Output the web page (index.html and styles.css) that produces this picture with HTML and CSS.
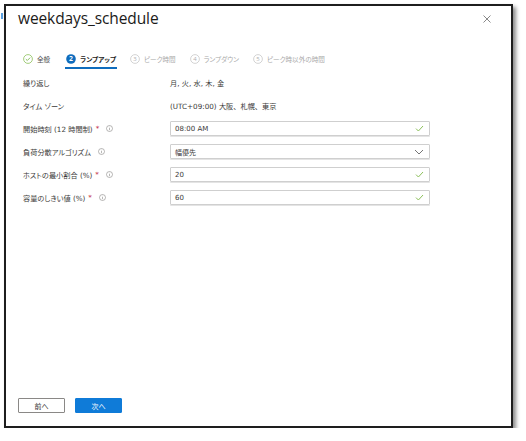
FILE: index.html
```html
<!DOCTYPE html>
<html lang="ja">
<head>
<meta charset="utf-8">
<title>weekdays_schedule</title>
<link rel="stylesheet" href="styles.css">
</head>
<body>
<div class="page">
  <span class="edge-mark"></span>
  <div class="dialog">
    <div class="header">
      <h1 class="title">weekdays_schedule</h1>
      <svg class="close" width="8" height="8" viewBox="0 0 8 8"><path d="M0.5 0.5 L7.5 7.5 M7.5 0.5 L0.5 7.5" stroke="#7a7a7a" stroke-width="0.9" fill="none"/></svg>
    </div>
    <div class="tabs">
      <div class="tab done">
        <svg width="10" height="10" viewBox="0 0 10 10"><circle cx="5" cy="5" r="4.4" fill="none" stroke="#8cc05a" stroke-width="0.8"/><path d="M2.8 5.1 L4.3 6.5 L7.2 3.6" fill="none" stroke="#6fae3c" stroke-width="0.8"/></svg>
        <span>全般</span>
      </div>
      <div class="tab active">
        <svg width="10" height="10" viewBox="0 0 10 10"><circle cx="5" cy="5" r="4.8" fill="#0f6cbd"/><text x="5" y="7.4" text-anchor="middle" font-size="6.8" font-weight="700" fill="#fff" font-family="Open Sans, sans-serif">2</text></svg>
        <span>ランプアップ</span>
      </div>
      <div class="tab">
        <svg width="10" height="10" viewBox="0 0 10 10"><circle cx="5" cy="5" r="4.4" fill="none" stroke="#c2c2c2" stroke-width="0.7"/><text x="5" y="7.2" text-anchor="middle" font-size="6" fill="#b0b0b0" font-family="Open Sans, sans-serif">3</text></svg>
        <span>ピーク時間</span>
      </div>
      <div class="tab">
        <svg width="10" height="10" viewBox="0 0 10 10"><circle cx="5" cy="5" r="4.4" fill="none" stroke="#c2c2c2" stroke-width="0.7"/><text x="5" y="7.2" text-anchor="middle" font-size="6" fill="#b0b0b0" font-family="Open Sans, sans-serif">4</text></svg>
        <span>ランプダウン</span>
      </div>
      <div class="tab">
        <svg width="10" height="10" viewBox="0 0 10 10"><circle cx="5" cy="5" r="4.4" fill="none" stroke="#c2c2c2" stroke-width="0.7"/><text x="5" y="7.2" text-anchor="middle" font-size="6" fill="#b0b0b0" font-family="Open Sans, sans-serif">5</text></svg>
        <span>ピーク時以外の時間</span>
      </div>
    </div>

    <div class="form">
      <div class="label">繰り返し</div>
      <div class="value">月, 火, 水, 木, 金</div>

      <div class="label">タイム ゾーン</div>
      <div class="value">(UTC+09:00) 大阪、札幌、東京</div>

      <div class="label">開始時刻 (12 時間制)<span class="req">*</span><svg class="info" width="7" height="7" viewBox="0 0 7 7"><circle cx="3.5" cy="3.5" r="3" fill="none" stroke="#8a8886" stroke-width="0.6"/><path d="M3.5 3 V5.2 M3.5 1.8 V2.3" stroke="#8a8886" stroke-width="0.6"/></svg></div>
      <div class="input"><span>08:00 AM</span>
        <svg class="check" width="9" height="7" viewBox="0 0 9 7"><path d="M1 3.6 L3.4 6 L8 1" fill="none" stroke="#8cc05a" stroke-width="1"/></svg></div>

      <div class="label">負荷分散アルゴリズム<svg class="info" width="7" height="7" viewBox="0 0 7 7"><circle cx="3.5" cy="3.5" r="3" fill="none" stroke="#8a8886" stroke-width="0.6"/><path d="M3.5 3 V5.2 M3.5 1.8 V2.3" stroke="#8a8886" stroke-width="0.6"/></svg></div>
      <div class="input"><span>幅優先</span>
        <svg class="chev" width="10" height="6" viewBox="0 0 10 6"><path d="M1 1 L5 5 L9 1" fill="none" stroke="#666" stroke-width="0.9"/></svg></div>

      <div class="label">ホストの最小割合 (%)<span class="req">*</span><svg class="info" width="7" height="7" viewBox="0 0 7 7"><circle cx="3.5" cy="3.5" r="3" fill="none" stroke="#8a8886" stroke-width="0.6"/><path d="M3.5 3 V5.2 M3.5 1.8 V2.3" stroke="#8a8886" stroke-width="0.6"/></svg></div>
      <div class="input"><span>20</span>
        <svg class="check" width="9" height="7" viewBox="0 0 9 7"><path d="M1 3.6 L3.4 6 L8 1" fill="none" stroke="#8cc05a" stroke-width="1"/></svg></div>

      <div class="label">容量のしきい値 (%)<span class="req">*</span><svg class="info" width="7" height="7" viewBox="0 0 7 7"><circle cx="3.5" cy="3.5" r="3" fill="none" stroke="#8a8886" stroke-width="0.6"/><path d="M3.5 3 V5.2 M3.5 1.8 V2.3" stroke="#8a8886" stroke-width="0.6"/></svg></div>
      <div class="input"><span>60</span>
        <svg class="check" width="9" height="7" viewBox="0 0 9 7"><path d="M1 3.6 L3.4 6 L8 1" fill="none" stroke="#8cc05a" stroke-width="1"/></svg></div>
    </div>

    <div class="footer">
      <button class="btn prev">前へ</button>
      <button class="btn next">次へ</button>
    </div>
  </div>
</div>
</body>
</html>
```
FILE: styles.css
```css
html, body {
  margin: 0;
  padding: 0;
  background: #ffffff;
}
body {
  font-family: "DejaVu Sans", "Noto Sans CJK JP", sans-serif;
  color: #323130;
}
.page {
  position: relative;
  padding: 4px 0 0 4px;
}
.edge-mark {
  position: absolute;
  left: 1px;
  top: 13px;
  width: 2px;
  height: 6px;
  background: #5aa0e0;
}
.dialog {
  box-sizing: border-box;
  width: 509px;
  height: 424px;
  border: 2px solid #1e1e1e;
  box-shadow: 3px 3px 4px rgba(0, 0, 0, 0.45);
  background: #fff;
  display: flex;
  flex-direction: column;
}
.header {
  display: flex;
  align-items: flex-start;
  justify-content: space-between;
  padding: 2px 20px 0 12px;
}
.title {
  margin: 0;
  font-family: "Open Sans", sans-serif;
  font-weight: 500;
  font-size: 15.5px;
  line-height: 20px;
  color: #1b1a19;
  letter-spacing: -0.1px;
}
.close {
  margin-top: 7px;
}
.tabs {
  display: flex;
  gap: 12px;
  margin: 23px 0 0 16px;
}
.tab {
  display: flex;
  align-items: center;
  gap: 4px;
  height: 16px;
  padding: 0 1px;
  font-family: "Noto Sans CJK JP", sans-serif;
  font-feature-settings: "palt";
  font-size: 6.6px;
  color: #a8a8a8;
  border-bottom: 2px solid transparent;
}
.tab.done {
  color: #505050;
  margin-right: 2px;
}
.tab.active {
  color: #1b1a19;
  font-weight: 700;
  border-bottom-color: #0f6cbd;
}
.form {
  display: grid;
  grid-template-columns: 147px 260px;
  grid-auto-rows: 15px;
  row-gap: 8px;
  margin: 6px 0 0 17px;
  font-size: 7.2px;
}
.label, .value {
  display: flex;
  align-items: center;
  color: #3b3a39;
}
.label {
  font-feature-settings: "palt";
}
.req {
  color: #c4314b;
  margin-left: 3px;
}
.info {
  margin-left: 7px;
}
.input {
  box-sizing: border-box;
  display: flex;
  align-items: center;
  justify-content: space-between;
  border: 1px solid #cfcfcf;
  box-shadow: 0 1px 0 #e4e4e4;
  border-radius: 1px;
  padding: 0 5px 0 4px;
  color: #3b3a39;
  font-size: 7px;
}
.footer {
  margin-top: auto;
  display: flex;
  gap: 10px;
  padding: 0 0 13px 12px;
}
.btn {
  box-sizing: border-box;
  width: 47px;
  height: 15px;
  font-family: "Noto Sans CJK JP", sans-serif;
  font-feature-settings: "palt";
  font-size: 7px;
  border-radius: 1px;
  padding: 0;
}
.btn.prev {
  background: #fff;
  border: 1px solid #8a8886;
  color: #323130;
}
.btn.next {
  background: #0f7bd8;
  border: 1px solid #0f7bd8;
  color: #fff;
}
```
